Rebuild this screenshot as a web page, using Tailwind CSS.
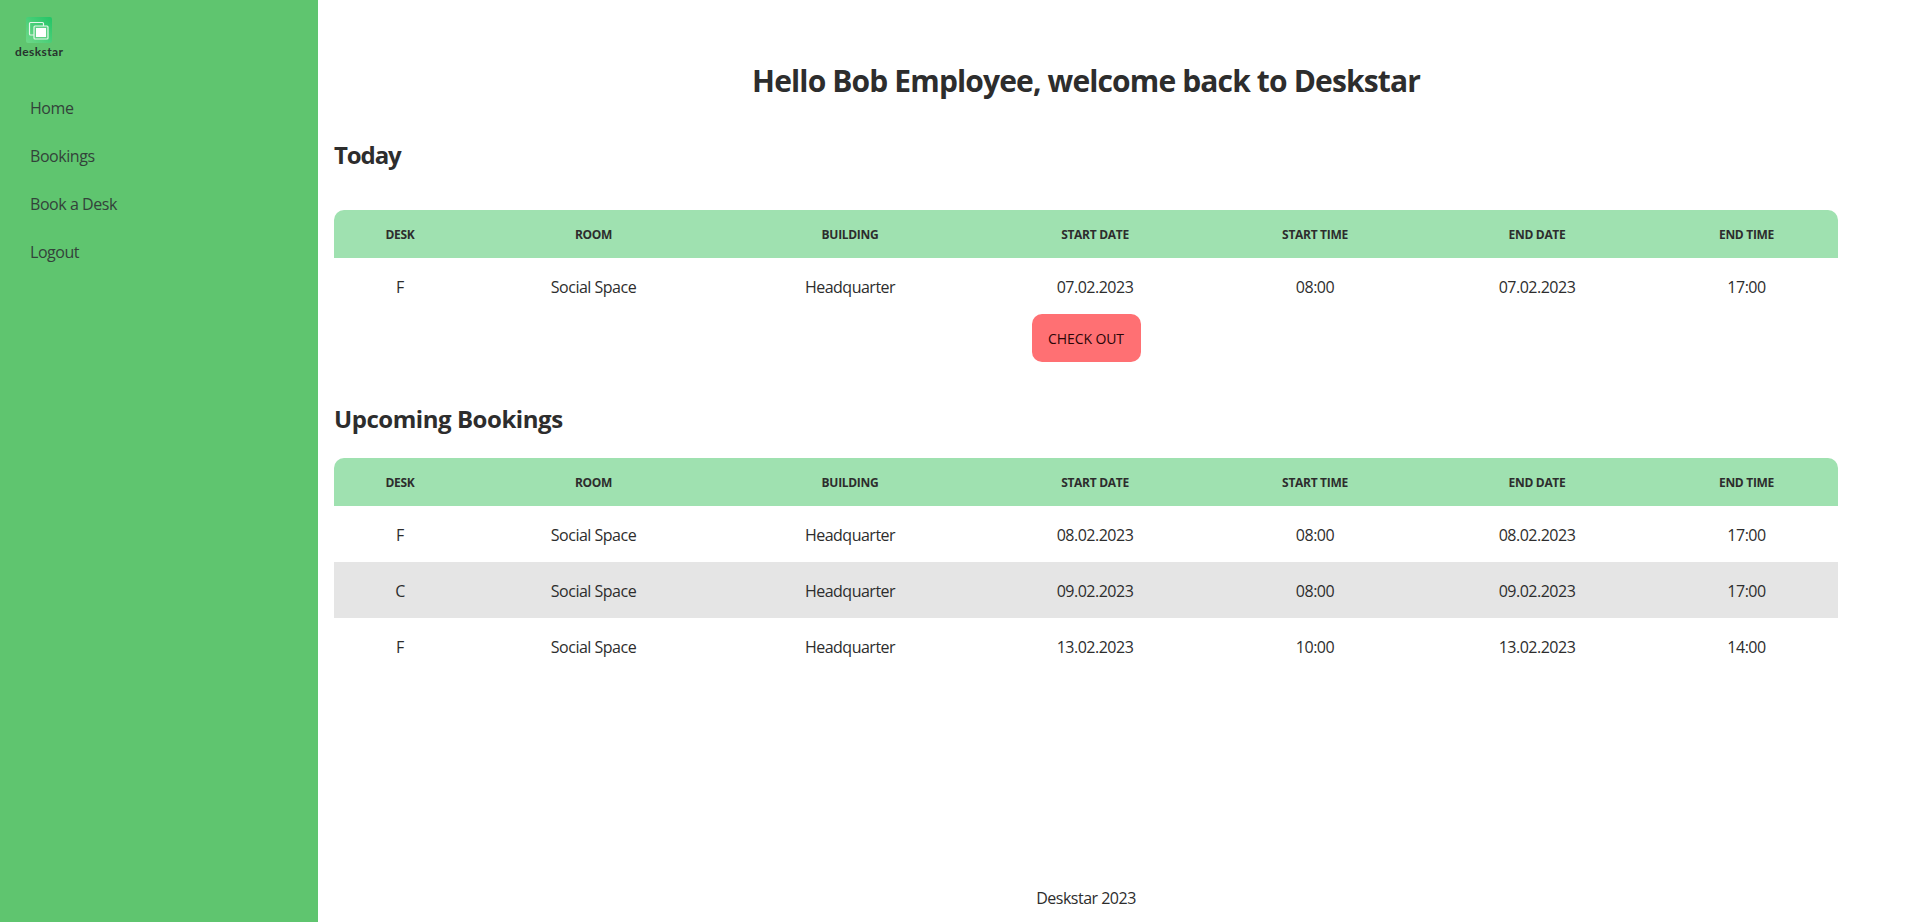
<!DOCTYPE html>
<html lang="en">
<head>
    <meta charset="UTF-8">
    <meta name="viewport" content="width=device-width, initial-scale=1.0">
    <title>Deskstar</title>
    <script src="https://cdn.jsdelivr.net/npm/@tailwindcss/browser@4"></script>
</head>
<body class="bg-white text-[#2d2d2d] font-['Open_Sans',sans-serif] overflow-hidden">
    <div class="flex h-[922px]">
        <!-- Sidebar -->
        <aside class="w-[318px] shrink-0 bg-[#5fc56f]">
            <div class="flex flex-col items-start pl-[15px] pt-[17px] h-[84px]">
                <svg class="ml-[11px]" width="26" height="26" viewBox="0 0 26 26">
                    <defs>
                        <linearGradient id="logo-bg" x1="0" y1="1" x2="1" y2="0">
                            <stop offset="0" stop-color="#6fd889"/>
                            <stop offset="1" stop-color="#22c566"/>
                        </linearGradient>
                    </defs>
                    <rect width="26" height="26" rx="2" fill="url(#logo-bg)"/>
                    <rect x="3.5" y="5.5" width="14" height="12.5" rx="1" fill="none" stroke="#e4f7ea" stroke-width="1.2"/>
                    <rect x="8" y="9" width="14" height="13" rx="1" fill="#5ed184" stroke="#e4f7ea" stroke-width="1.2"/>
                    <rect x="10" y="11" width="10" height="9" fill="#ffffff"/>
                </svg>
                <span class="font-['Lato',sans-serif] font-bold text-[12px] leading-[13px] tracking-[0.4px] text-[#27332d] mt-[2px]">deskstar</span>
            </div>
            <nav class="flex flex-col pl-[30px] text-[#33423a]">
                <a href="#" class="h-[48px] flex items-center text-[16px] tracking-[-0.45px]">Home</a>
                <a href="#" class="h-[48px] flex items-center text-[16px] tracking-[-0.45px]">Bookings</a>
                <a href="#" class="h-[48px] flex items-center text-[16px] tracking-[-0.45px]">Book a Desk</a>
                <a href="#" class="h-[48px] flex items-center text-[16px] tracking-[-0.45px]">Logout</a>
            </nav>
        </aside>

        <!-- Main -->
        <main class="flex-1 flex flex-col pl-[16px] pr-[80px] pt-[61px]">
            <h1 class="text-[30px] leading-[40px] font-bold text-center tracking-[-0.86px]">Hello Bob Employee, welcome back to Deskstar</h1>

            <h2 class="text-[24px] leading-[32px] font-bold mt-[38px] mb-[39px] tracking-[-1.1px]">Today</h2>
            <table class="w-full table-fixed border-collapse">
                <thead>
                    <tr class="h-[48px] bg-[#9fe1b0] text-[12px] uppercase tracking-[-0.3px]">
                        <th class="w-[132px] pt-[2px] font-bold rounded-tl-[10px]">Desk</th>
                        <th class="w-[255px] pt-[2px] font-bold">Room</th>
                        <th class="w-[258px] pt-[2px] font-bold">Building</th>
                        <th class="w-[232px] pt-[2px] font-bold">Start Date</th>
                        <th class="w-[208px] pt-[2px] font-bold">Start Time</th>
                        <th class="w-[236px] pt-[2px] font-bold">End Date</th>
                        <th class="pt-[2px] font-bold rounded-tr-[10px]">End Time</th>
                    </tr>
                </thead>
                <tbody class="text-[16px] text-center tracking-[-0.5px]">
                    <tr class="h-[56px]">
                        <td class="pt-[2px]">F</td><td class="pt-[2px]">Social Space</td><td class="pt-[2px]">Headquarter</td><td class="pt-[2px]">07.02.2023</td><td class="pt-[2px]">08:00</td><td class="pt-[2px]">07.02.2023</td><td class="pt-[2px]">17:00</td>
                    </tr>
                </tbody>
            </table>
            <div class="flex justify-center">
                <button class="w-[109px] h-[48px] rounded-[10px] bg-[#ff7073] text-[14px] text-[#2a0608] tracking-[-0.1px]">CHECK OUT</button>
            </div>

            <h2 class="text-[24px] leading-[32px] font-bold mt-[41px] mb-[23px] tracking-[-0.45px]">Upcoming Bookings</h2>
            <table class="w-full table-fixed border-collapse">
                <thead>
                    <tr class="h-[48px] bg-[#9fe1b0] text-[12px] uppercase tracking-[-0.3px]">
                        <th class="w-[132px] pt-[2px] font-bold rounded-tl-[10px]">Desk</th>
                        <th class="w-[255px] pt-[2px] font-bold">Room</th>
                        <th class="w-[258px] pt-[2px] font-bold">Building</th>
                        <th class="w-[232px] pt-[2px] font-bold">Start Date</th>
                        <th class="w-[208px] pt-[2px] font-bold">Start Time</th>
                        <th class="w-[236px] pt-[2px] font-bold">End Date</th>
                        <th class="pt-[2px] font-bold rounded-tr-[10px]">End Time</th>
                    </tr>
                </thead>
                <tbody class="text-[16px] text-center tracking-[-0.5px]">
                    <tr class="h-[56px]">
                        <td class="pt-[2px]">F</td><td class="pt-[2px]">Social Space</td><td class="pt-[2px]">Headquarter</td><td class="pt-[2px]">08.02.2023</td><td class="pt-[2px]">08:00</td><td class="pt-[2px]">08.02.2023</td><td class="pt-[2px]">17:00</td>
                    </tr>
                    <tr class="h-[56px] bg-[#e5e5e5]">
                        <td class="pt-[2px]">C</td><td class="pt-[2px]">Social Space</td><td class="pt-[2px]">Headquarter</td><td class="pt-[2px]">09.02.2023</td><td class="pt-[2px]">08:00</td><td class="pt-[2px]">09.02.2023</td><td class="pt-[2px]">17:00</td>
                    </tr>
                    <tr class="h-[56px]">
                        <td class="pt-[2px]">F</td><td class="pt-[2px]">Social Space</td><td class="pt-[2px]">Headquarter</td><td class="pt-[2px]">13.02.2023</td><td class="pt-[2px]">10:00</td><td class="pt-[2px]">13.02.2023</td><td class="pt-[2px]">14:00</td>
                    </tr>
                </tbody>
            </table>

            <footer class="mt-auto pb-[12px] text-center text-[16px] leading-[24px] tracking-[-0.5px]">Deskstar 2023</footer>
        </main>
    </div>
</body>
</html>
